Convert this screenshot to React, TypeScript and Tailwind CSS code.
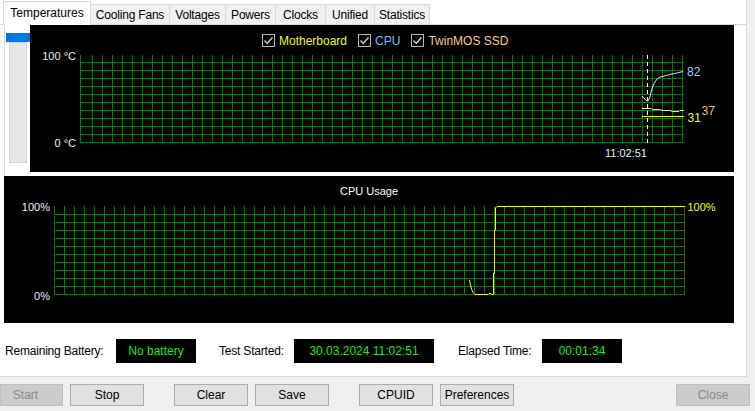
import React from "react";

const tabs = [
  { label: "Cooling Fans", w: 79 },
  { label: "Voltages", w: 56 },
  { label: "Powers", w: 50 },
  { label: "Clocks", w: 50 },
  { label: "Unified", w: 49 },
  { label: "Statistics", w: 55 },
];

const GRID = "#008000";

function range(n: number, start: number, step: number) {
  return Array.from({ length: n }, (_, i) => start + i * step);
}

function Check({ color, label }: { color: string; label: string }) {
  return (
    <div className="flex items-center">
      <div className="flex h-[13px] w-[13px] items-center justify-center border border-[#b4b4b4] bg-black">
        <svg width="11" height="11" viewBox="0 0 11 11">
          <polyline points="1.5,5.5 4.2,8.2 9.5,2.5" fill="none" stroke="#d8d8d8" strokeWidth="1.3" />
        </svg>
      </div>
      <span className="ml-[4px] text-[12px] leading-none" style={{ color }}>
        {label}
      </span>
    </div>
  );
}

function TempChart() {
  const vx = [80, ...range(60, 92, 10)];
  const hy = range(11, 62, 8);
  return (
    <svg width={704} height={147} className="pointer-events-none absolute left-0 top-0" shapeRendering="crispEdges">
      <g transform="translate(-30,-25)">
        {vx.map((x) => (
          <line key={"v" + x} x1={x + 0.5} x2={x + 0.5} y1={55} y2={143} stroke={GRID} />
        ))}
        {hy.map((y) => (
          <line key={"h" + y} x1={80} x2={684} y1={y + 0.5} y2={y + 0.5} stroke={GRID} />
        ))}
        <line x1={647.5} x2={647.5} y1={55} y2={143} stroke="#ffffff" strokeDasharray="4 3" />
        <g shapeRendering="auto" fill="none" strokeWidth={1}>
          <polyline
            points="642,96 644,98 646,100.5 648,101 650,97 651,92 653,86 655,82 657,79 660,77 664,76 668,75 672,74 677,73 683,71.5"
            stroke="#d6e4ff"
          />
          <polyline
            points="642,108.5 651,108.5 652,109.5 660,109.5 662,110.5 670,110.5 672,111.5 679,111.5 680,110.5 684,110.5"
            stroke="#ffdca8"
          />
          <line x1={642} x2={684} y1={116.5} y2={116.5} stroke="#ffff00" />
        </g>
        <g fontFamily="'Liberation Sans', Arial, sans-serif" fontSize="11" fill="#e6efff" shapeRendering="auto">
          <text x={76} y={59.5} textAnchor="end">100 °C</text>
          <text x={76} y={147} textAnchor="end">0 °C</text>
          <text x={626} y={157} textAnchor="middle">11:02:51</text>
          <text x={687} y={76} fontSize="12" fill="#a9c9f6">82</text>
          <text x={701.5} y={115} fontSize="12" fill="#ffb468">37</text>
          <text x={687.5} y={121.5} fontSize="12" fill="#f4ff20">31</text>
        </g>
      </g>
    </svg>
  );
}

function CpuChart() {
  const vx = range(64, 54, 10);
  const hy = range(11, 214, 8);
  return (
    <svg width={730} height={147} className="pointer-events-none absolute left-0 top-0" shapeRendering="crispEdges">
      <g transform="translate(-4,-176)">
        {vx.map((x) => (
          <line key={"v" + x} x1={x + 0.5} x2={x + 0.5} y1={206} y2={295} stroke={GRID} />
        ))}
        {hy.map((y) => (
          <line key={"h" + y} x1={54} x2={685} y1={y + 0.5} y2={y + 0.5} stroke={GRID} />
        ))}
        <polyline
          shapeRendering="auto"
          fill="none"
          stroke="#ffff00"
          strokeWidth={1}
          points="469.5,280 470.5,285 471.5,289 473,292.5 475,294.5 488,294.5 489,293.5 491,293.5 492,294.5 493.5,294.5 493.5,273 494.5,273 494.5,230 495.5,230 495.5,208 497,206.5 685,206.5"
        />
        <g fontFamily="'Liberation Sans', Arial, sans-serif" fontSize="11" fill="#e6efff" shapeRendering="auto">
          <text x={369} y={195} textAnchor="middle" fill="#ffffff">CPU Usage</text>
          <text x={50} y={211} textAnchor="end">100%</text>
          <text x={50} y={300} textAnchor="end">0%</text>
          <text x={687.5} y={211} fill="#f4ff20">100%</text>
        </g>
      </g>
    </svg>
  );
}

function Field({ label, value, lw, w, gap }: { label: string; value: string; lw: number; w: number; gap: number }) {
  return (
    <div className="flex items-center" style={{ marginLeft: gap }}>
      <span className="whitespace-nowrap text-[12px] tracking-[-0.2px] text-black" style={{ width: lw }}>
        {label}
      </span>
      <div
        className="flex h-[24px] items-center justify-center bg-black text-[12px] text-[#1ee61e]"
        style={{ width: w }}
      >
        {value}
      </div>
    </div>
  );
}

function Btn({ children, disabled, w = 74, ml = 0, className }: { children: React.ReactNode; disabled?: boolean; w?: number; ml?: number; className?: string }) {
  return (
    <button
      className={
        "flex h-[22px] items-center justify-center border text-[12px] " +
        (disabled ? "border-[#bfbfbf] bg-[#cccccc] text-[#8a8a8a] " : "border-[#adadad] bg-[#e1e1e1] text-black ") +
        (className ?? "")
      }
      style={{ width: w, marginLeft: ml || undefined }}
    >
      {children}
    </button>
  );
}

export default function App() {
  return (
    <div className="flex h-[411px] w-[755px] flex-col bg-[#f0f0f0] font-['Liberation_Sans',Arial,sans-serif] text-[12px]">
      <div className="flex h-[377px] w-[747px] flex-col border-b border-r border-[#dadada] bg-white">
        {/* tabs */}
        <div className="flex h-[25px] items-end border-b border-[#d9d9d9] pl-[3px]">
          <div className="relative z-10 -mb-px flex h-[24px] w-[88px] items-center justify-center border border-b-0 border-[#d9d9d9] bg-white pb-[2px]">
            Temperatures
          </div>
          {tabs.map((t) => (
            <div
              key={t.label}
              className="flex h-[20px] items-center justify-center border-r border-t border-[#d9d9d9] bg-[#f0f0f0] tracking-[-0.2px]"
              style={{ width: t.w }}
            >
              {t.label}
            </div>
          ))}
        </div>

        {/* temperature graph row */}
        <div className="ml-[4px] flex h-[151px]">
          <div className="flex w-[26px] flex-col border-l border-[#d9d9d9]">
            <div className="ml-[1px] mt-[8px] h-[9px] w-[24px] bg-[#0078d7]" />
            <div className="ml-[4px] h-[121px] w-[18px] border border-[#d4d4d4] bg-[#e6e7e8]" />
          </div>
          <div className="relative h-[147px] w-[704px] bg-black">
            <div className="flex items-center gap-[11px] pl-[232px] pt-[9px]">
              <Check color="#eaff10" label="Motherboard" />
              <Check color="#80b8ff" label="CPU" />
              <Check color="#ffc890" label="TwinMOS SSD" />
            </div>
            <TempChart />
          </div>
        </div>

        {/* cpu usage graph */}
        <div className="relative ml-[4px] h-[147px] w-[730px] bg-black">
          <CpuChart />
        </div>

        {/* status row */}
        <div className="flex h-[53px] items-start pl-[5px] pt-[16px]">
          <Field label="Remaining Battery:" value="No battery" lw={111} w={80} gap={0} />
          <Field label="Test Started:" value="30.03.2024 11:02:51" lw={75} w={140} gap={23} />
          <Field label="Elapsed Time:" value="00:01:34" lw={84} w={80} gap={24} />
        </div>
      </div>

      {/* buttons */}
      <div className="flex pt-[7px]">
        <Btn disabled w={63} className="pr-[12px]">Start</Btn>
        <Btn ml={7}>Stop</Btn>
        <Btn ml={30}>Clear</Btn>
        <Btn ml={7}>Save</Btn>
        <Btn ml={30}>CPUID</Btn>
        <Btn ml={7}>Preferences</Btn>
        <Btn disabled className="ml-auto mr-[5px]">Close</Btn>
      </div>
    </div>
  );
}
